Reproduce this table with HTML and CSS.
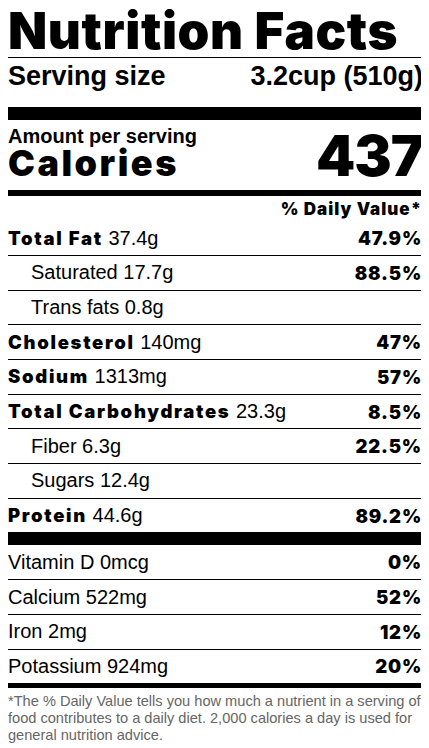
FILE: index.html
```html
<!DOCTYPE html>
<html>
  <head>
    <link rel="stylesheet" href="styles.css">
  </head>
  <body>
    <div class="label">
      <div class="title">Nutrition Facts</div>

      <div class="serving">
        <span>Serving size</span>
        <span>3.2cup (510g)</span>
      </div>

      <div class="calories">
        <div class="calories-left">
          <div class="amount">Amount per serving</div>
          <div class="calories-word">Calories</div>
        </div>
        <div class="calories-num">437</div>
      </div>

      <div class="daily">% Daily Value*</div>

      <div class="row">
        <span><b>Total Fat</b> 37.4g</span>
        <b class="pct">47.9%</b>
      </div>
      <div class="row sub">
        <span>Saturated 17.7g</span>
        <b class="pct">88.5%</b>
      </div>
      <div class="row sub">
        <span>Trans fats 0.8g</span>
      </div>
      <div class="row">
        <span><b>Cholesterol</b> 140mg</span>
        <b class="pct">47%</b>
      </div>
      <div class="row">
        <span><b>Sodium</b> 1313mg</span>
        <b class="pct">57%</b>
      </div>
      <div class="row">
        <span><b>Total Carbohydrates</b> 23.3g</span>
        <b class="pct">8.5%</b>
      </div>
      <div class="row sub">
        <span>Fiber 6.3g</span>
        <b class="pct">22.5%</b>
      </div>
      <div class="row sub">
        <span>Sugars 12.4g</span>
      </div>
      <div class="row thick">
        <span><b>Protein</b> 44.6g</span>
        <b class="pct">89.2%</b>
      </div>

      <div class="row">
        <span>Vitamin D 0mcg</span>
        <b class="pct">0%</b>
      </div>
      <div class="row">
        <span>Calcium 522mg</span>
        <b class="pct">52%</b>
      </div>
      <div class="row">
        <span>Iron 2mg</span>
        <b class="pct">12%</b>
      </div>
      <div class="row medium">
        <span>Potassium 924mg</span>
        <b class="pct">20%</b>
      </div>

      <p class="footnote">
        *The % Daily Value tells you how much a nutrient in a serving of
        food contributes to a daily diet. 2,000 calories a day is used for
        general nutrition advice.
      </p>
    </div>
  </body>
</html>
```

FILE: styles.css
```css
body {
  margin: 8px;
  font-family: "Liberation Sans", Arial, sans-serif;
  color: #000;
  background: #fff;
}
.label {
  width: 417px;
}
/* heavy face standing in for Arial Black */
.title,
.calories-word,
.calories-num,
.daily,
.row b {
  font-family: Inter, "Liberation Sans", sans-serif;
  font-weight: 900;
}
.title {
  margin-top: -3.5px;
  font-size: 51px;
  line-height: 52.5px;
  letter-spacing: 0.6px;
  white-space: nowrap;
  border-bottom: 1px solid #000;
}
.serving {
  display: flex;
  justify-content: space-between;
  padding: 2.7px 2px 16.3px 0;
  font-size: 27px;
  line-height: 30px;
  font-weight: 700;
  border-bottom: 13px solid #000;
}
.calories {
  display: flex;
  justify-content: space-between;
  align-items: flex-end;
  padding: 7px 2px 10px 0;
  border-bottom: 6px solid #000;
}
.amount {
  font-size: 20px;
  line-height: 19px;
  font-weight: 700;
}
.calories-word {
  font-size: 36px;
  line-height: 34px;
  letter-spacing: 2.5px;
}
.calories-num {
  font-size: 56px;
  line-height: 48px;
  letter-spacing: -1px;
}
.daily {
  padding: 3px 3px 2.3px 0;
  font-size: 17px;
  line-height: 20px;
  letter-spacing: 1px;
  text-align: right;
}
.row {
  display: flex;
  justify-content: space-between;
  align-items: center;
  height: 33.7px;
  padding-right: 3px;
  font-size: 20px;
  border-bottom: 1px solid #000;
}
.row b {
  font-size: 18.5px;
  letter-spacing: 1.7px;
}
.row b.pct {
  letter-spacing: 0.8px;
}
.row.sub {
  padding-left: 23px;
}
.row.thick {
  border-bottom-width: 13px;
}
.row.medium {
  border-bottom-width: 5px;
}
.footnote {
  margin: 0;
  padding-top: 4.4px;
  font-size: 14.6px;
  line-height: 17px;
  color: #666;
}
```
